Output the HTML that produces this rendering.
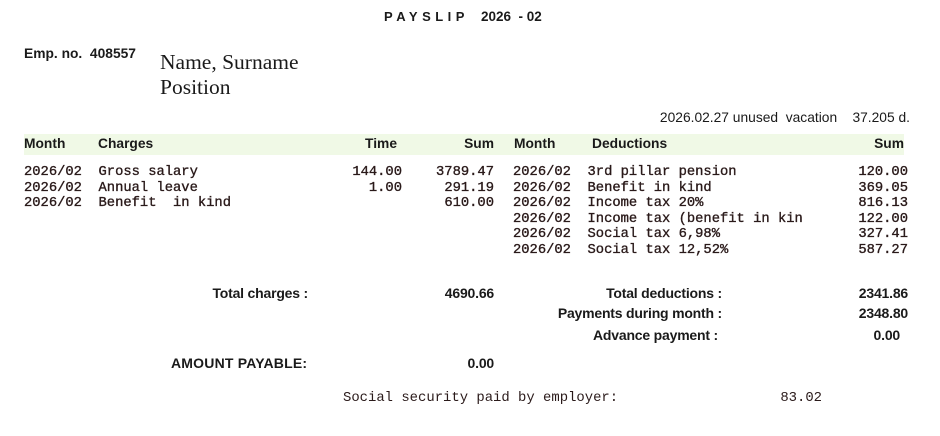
<!DOCTYPE html>
<html><head><meta charset="utf-8"><style>
html,body{margin:0;padding:0;background:#fff;width:940px;height:436px;overflow:hidden;position:relative;color:#1a1a1a}
div{position:absolute;white-space:pre;line-height:1}
.s{font-family:"Liberation Sans",sans-serif;font-weight:bold;font-size:13.8px}
.n{font-family:"Liberation Sans",sans-serif;font-size:13.8px}
.m{font-family:"Liberation Mono",monospace;font-size:13.8px;-webkit-text-stroke:0.35px #2a1a1a;color:#2a1a1a}
.t{font-family:"Liberation Sans",sans-serif;font-weight:bold;font-size:14px;letter-spacing:-0.2px}
.r{text-align:right}
.serif{font-family:"Liberation Serif",serif;font-size:21.5px}
</style></head><body>
<div class="s" style="left:384px;top:10px;letter-spacing:4.5px;font-size:13px">PAYSLIP</div>
<div class="s" style="left:481px;top:10px;font-size:13.5px">2026&nbsp; - 02</div>
<div class="s" style="left:24px;top:47px">Emp. no.&nbsp; 408557</div>
<div class="serif" style="left:160px;top:52px">Name, Surname</div>
<div class="serif" style="left:160px;top:77px">Position</div>
<div class="n" style="right:30px;top:111px">2026.02.27 unused&nbsp; vacation&nbsp;&nbsp;&nbsp; 37.205 d.</div>
<div style="left:24px;top:134px;width:880px;height:21px;background:#f0f9e6"></div>
<div class="s" style="left:24px;top:137px">Month</div>
<div class="s" style="left:98px;top:137px">Charges</div>
<div class="s r" style="right:543px;top:137px">Time</div>
<div class="s r" style="right:446px;top:137px">Sum</div>
<div class="s" style="left:514px;top:137px">Month</div>
<div class="s" style="left:592px;top:137px">Deductions</div>
<div class="s r" style="right:36px;top:137px">Sum</div>
<div class="m" style="left:24px;top:165px;line-height:15.5px">2026/02  Gross salary
2026/02  Annual leave
2026/02  Benefit  in kind</div>
<div class="m r" style="right:538px;top:165px;line-height:15.5px">144.00
1.00</div>
<div class="m r" style="right:446px;top:165px;line-height:15.5px">3789.47
291.19
610.00</div>
<div class="m" style="left:513px;top:165px;line-height:15.5px">2026/02  3rd pillar pension
2026/02  Benefit in kind
2026/02  Income tax 20%
2026/02  Income tax (benefit in kin
2026/02  Social tax 6,98%
2026/02  Social tax 12,52%</div>
<div class="m r" style="right:32px;top:165px;line-height:15.5px">120.00
369.05
816.13
122.00
327.41
587.27</div>
<div class="t r" style="right:632px;top:286px">Total charges :</div>
<div class="t r" style="right:446px;top:286px">4690.66</div>
<div class="t r" style="right:218px;top:286px">Total deductions :</div>
<div class="t r" style="right:32px;top:286px">2341.86</div>
<div class="t r" style="right:218px;top:306px">Payments during month :</div>
<div class="t r" style="right:32px;top:306px">2348.80</div>
<div class="t r" style="right:222px;top:328px">Advance payment :</div>
<div class="t r" style="right:40px;top:328px">0.00</div>
<div class="t" style="left:171px;top:356px;letter-spacing:0.2px">AMOUNT PAYABLE:</div>
<div class="t r" style="right:446px;top:356px">0.00</div>
<div class="m" style="left:343px;top:392px;font-size:13.9px;-webkit-text-stroke:0">Social security paid by employer:</div>
<div class="m r" style="right:118px;top:392px;font-size:13.9px;-webkit-text-stroke:0">83.02</div>
</body></html>
